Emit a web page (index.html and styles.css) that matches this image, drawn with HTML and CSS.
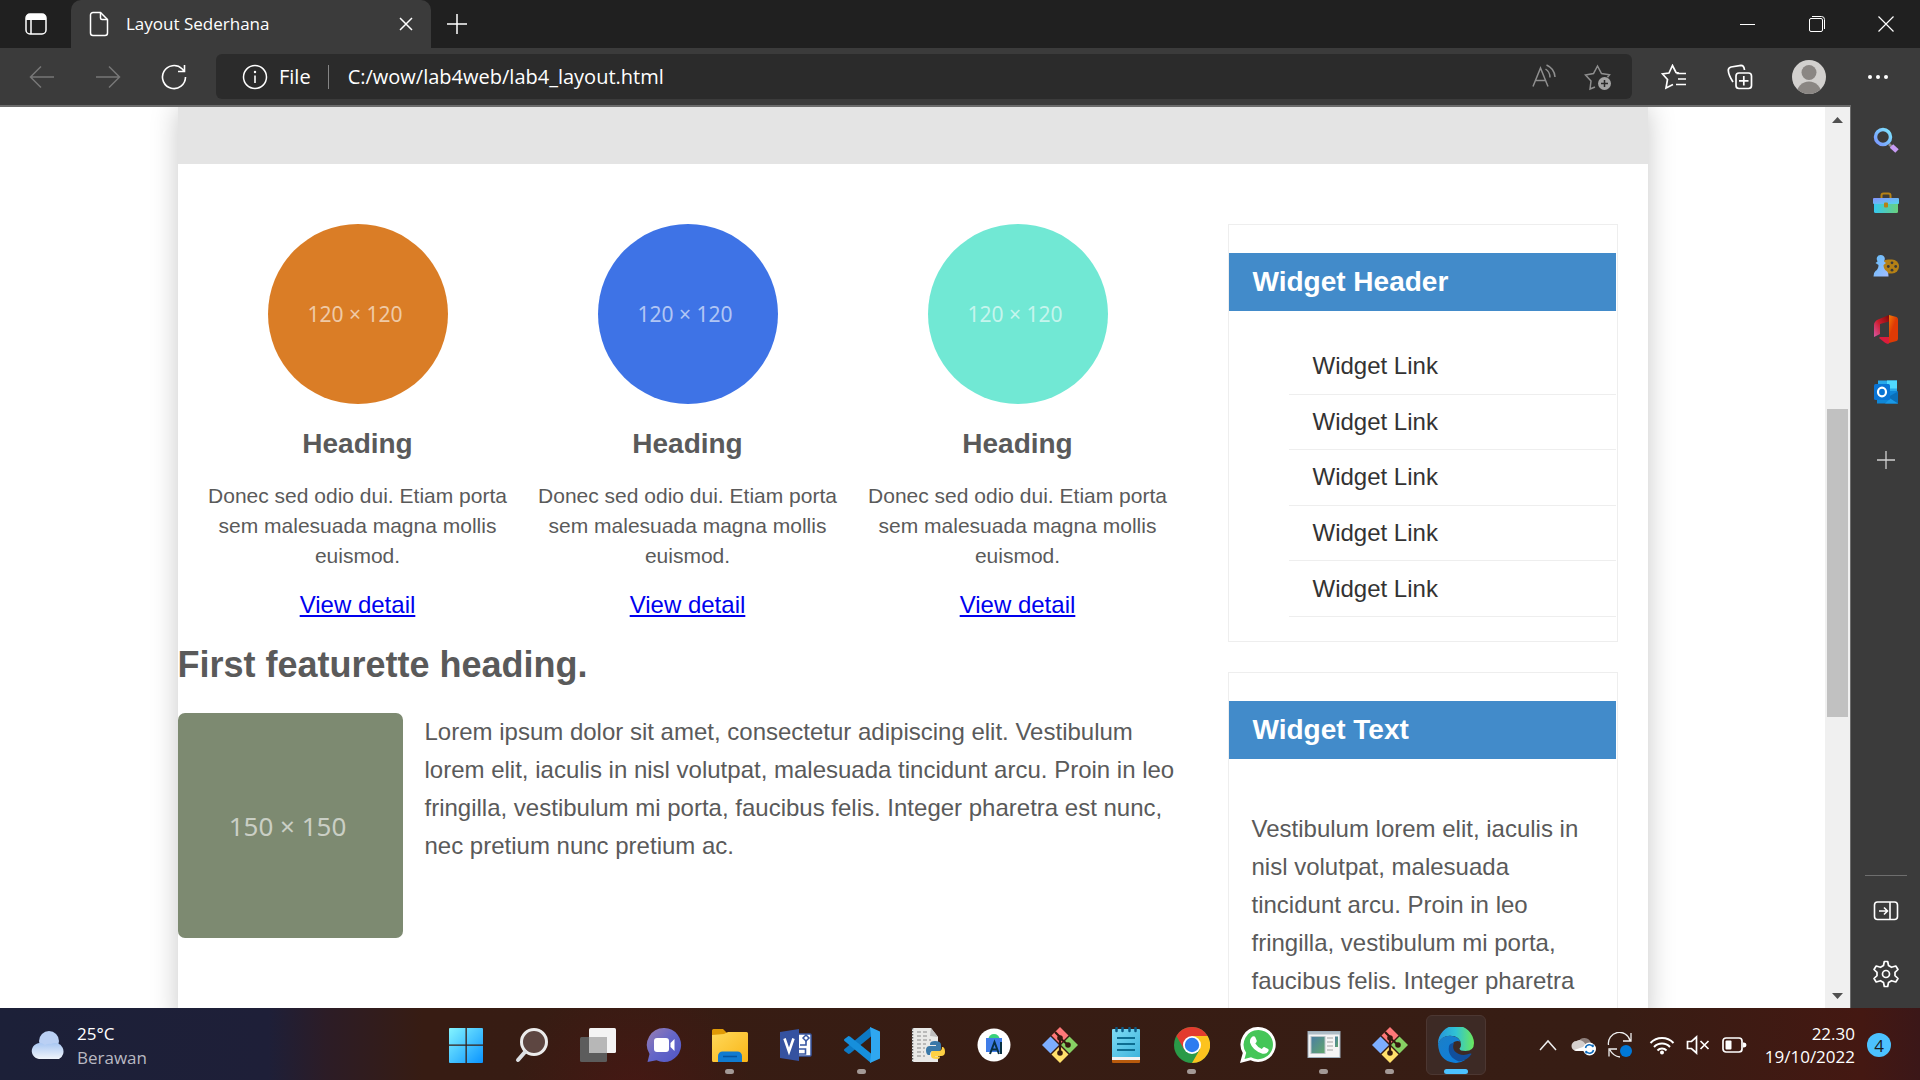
FILE: index.html
```html
<!DOCTYPE html>
<html lang="id">
<head>
<meta charset="utf-8">
<title>Layout Sederhana</title>
<link rel="stylesheet" href="styles.css">
</head>
<body>
<header class="titlebar">
  <button class="tab-actions" aria-label="Tab actions"><svg width="24" height="24" viewBox="0 0 24 24"><rect x="2" y="2" width="20" height="20" rx="4" fill="none" stroke="#fff" stroke-width="1.5"/><path d="M2 8V6a4 4 0 0 1 4-4h12a4 4 0 0 1 4 4v2z" fill="#fff"/><path d="M7 8v14" stroke="#fff" stroke-width="1.5"/></svg></button>
  <div class="tab">
    <svg width="20" height="26" viewBox="0 0 20 26" fill="none" stroke="#fff" stroke-width="1.5"><path d="M4 1.500h7.500l7 7V22a2.500 2.500 0 0 1-2.500 2.500H4A2.500 2.500 0 0 1 1.500 22V4A2.500 2.500 0 0 1 4 1.500z"/><path d="M11.500 1.500V7A1.500 1.500 0 0 0 13 8.500h5.500"/></svg>
    <span class="tab-title">Layout Sederhana</span>
    <button class="tab-close" aria-label="Close tab"><svg width="14" height="14" viewBox="0 0 14 14"><path d="M1 1l12 12M13 1L1 13" stroke="#fff" stroke-width="1.500"/></svg></button>
  </div>
  <button class="new-tab" aria-label="New tab"><svg width="22" height="22" viewBox="0 0 22 22"><path d="M11 1v20M1 11h20" stroke="#fff" stroke-width="1.500"/></svg></button>
  <div class="window-buttons">
    <button aria-label="Minimize"><svg width="16" height="16" viewBox="0 0 16 16"><path d="M0 8.500h15" stroke="#fff"/></svg></button>
    <button aria-label="Restore"><svg width="16" height="16" viewBox="0 0 16 16" fill="none" stroke="#fff"><rect x=".5" y="2.500" width="13" height="13" rx="1.500"/><path d="M3 .5h9.500a3 3 0 0 1 3 3V13"/></svg></button>
    <button aria-label="Close"><svg width="16" height="16" viewBox="0 0 16 16"><path d="M.5.500l15 15M15.500.500l-15 15" stroke="#fff" stroke-width="1.200"/></svg></button>
  </div>
</header>

<nav class="toolbar">
  <button class="nav-button" aria-label="Back"><svg width="26" height="24" viewBox="0 0 26 24" fill="none" stroke="#777" stroke-width="1.500"><path d="M25 12H1.500M12 1.500L1.500 12 12 22.500"/></svg></button>
  <button class="nav-button" aria-label="Forward"><svg width="26" height="24" viewBox="0 0 26 24" fill="none" stroke="#777" stroke-width="1.500"><path d="M1 12h23.500M14 1.500L24.500 12 14 22.500"/></svg></button>
  <button class="nav-button" aria-label="Refresh"><svg width="26" height="26" viewBox="0 0 26 26" fill="none" stroke="#fff" stroke-width="1.600"><path d="M24.500 13A11.500 11.500 0 1 1 21 4.800l1.800 2M23.500 1v6.500H17"/></svg></button>
  <div class="address">
    <svg width="26" height="26" viewBox="0 0 26 26"><circle cx="13" cy="13" r="11.500" fill="none" stroke="#fff" stroke-width="1.500"/><path d="M13 11.500V19" stroke="#fff" stroke-width="1.600"/><circle cx="13" cy="8" r="1.200" fill="#fff"/></svg>
    <span class="scheme">File</span>
    <input class="url" type="text" aria-label="Address" value="C:/wow/lab4web/lab4_layout.html">
    <button aria-label="Read aloud"><svg width="26" height="26" viewBox="0 0 26 26" fill="none" stroke="#8f8f8f" stroke-width="1.500"><path d="M2 22.500L9.500 4 17 22.500M4.500 16.500h10M14.500 5q4.500 3 4.500 8.500M15.500 1q8 3.500 8.500 12"/></svg></button>
    <button aria-label="Add to favorites"><svg width="28" height="28" viewBox="0 0 28 28"><path d="M11 24l-5 2 1-8-5.500-6 8-1.500L13.500 3l4 7.500 8 1.300-2 2.500" fill="none" stroke="#8f8f8f" stroke-width="1.500"/><circle cx="20.500" cy="20.500" r="6.500" fill="#a3a3a3"/><path d="M20.500 17v7M17 20.500h7" stroke="#2b2b2b" stroke-width="1.500"/></svg></button>
  </div>
  <div class="tools">
    <button aria-label="Favorites"><svg width="26" height="26" viewBox="0 0 26 26" fill="none" stroke="#fff" stroke-width="1.700"><path d="M18 9l-3-.5-3.500-7L8 9 1.500 10l5 5.500-1.500 8.500 7-3.500M15.500 9.500H25M17 15h8M15 20.500h10"/></svg></button>
    <button aria-label="Collections"><svg width="26" height="26" viewBox="0 0 26 26" fill="none" stroke="#fff" stroke-width="1.700"><rect x="9" y="9" width="15.500" height="15.500" rx="3"/><path d="M16.800 12v9.500M12 16.800h9.500M6 18Q1.500 11 1.300 6.500 1 4 4 3l10-1.700q3 0 3.500 4.700"/></svg></button>
    <button class="profile" aria-label="Profile"><svg width="34" height="34" viewBox="0 0 34 34"><clipPath id="round"><circle cx="17" cy="17" r="17"/></clipPath><g clip-path="url(#round)"><path d="M0 0h34v34H0z" fill="#d2d0ce"/><circle cx="17" cy="12.500" r="7.500" fill="#8a8683"/><circle cx="17" cy="34" r="12.500" fill="#8a8683"/></g></svg></button>
    <button aria-label="Settings and more"><svg width="22" height="6" viewBox="0 0 22 6" fill="#fff"><circle cx="3" cy="3" r="2"/><circle cx="11" cy="3" r="2"/><circle cx="19" cy="3" r="2"/></svg></button>
  </div>
</nav>

<div class="workspace">
  <div class="viewport">
    <div class="page">
      <div class="container">
        <div class="hero"></div>
        <div class="columns">
          <main class="main">
            <div class="features">
              <section class="feature">
                <div class="thumb thumb-orange">120 × 120</div>
                <h3>Heading</h3>
                <p>Donec sed odio dui. Etiam porta sem malesuada magna mollis euismod.</p>
                <a href="#">View detail</a>
              </section>
              <section class="feature">
                <div class="thumb thumb-blue">120 × 120</div>
                <h3>Heading</h3>
                <p>Donec sed odio dui. Etiam porta sem malesuada magna mollis euismod.</p>
                <a href="#">View detail</a>
              </section>
              <section class="feature">
                <div class="thumb thumb-mint">120 × 120</div>
                <h3>Heading</h3>
                <p>Donec sed odio dui. Etiam porta sem malesuada magna mollis euismod.</p>
                <a href="#">View detail</a>
              </section>
            </div>
            <article class="featurette">
              <h2>First featurette heading.</h2>
              <div class="media">
                <div class="picture">150 × 150</div>
                <p>Lorem ipsum dolor sit amet, consectetur adipiscing elit. Vestibulum lorem elit, iaculis in nisl volutpat, malesuada tincidunt arcu. Proin in leo fringilla, vestibulum mi porta, faucibus felis. Integer pharetra est nunc, nec pretium nunc pretium ac.</p>
              </div>
            </article>
          </main>
          <aside class="widgets">
            <section class="widget">
              <h3>Widget Header</h3>
              <ul>
                <li><a href="#">Widget Link</a></li>
                <li><a href="#">Widget Link</a></li>
                <li><a href="#">Widget Link</a></li>
                <li><a href="#">Widget Link</a></li>
                <li><a href="#">Widget Link</a></li>
              </ul>
            </section>
            <section class="widget">
              <h3>Widget Text</h3>
              <p>Vestibulum lorem elit, iaculis in nisl volutpat, malesuada tincidunt arcu. Proin in leo fringilla, vestibulum mi porta, faucibus felis. Integer pharetra</p>
            </section>
          </aside>
        </div>
      </div>
    </div>
    <div class="scrollbar">
      <svg width="11" height="6" viewBox="0 0 11 6"><path d="M0 6l5.500-6L11 6z" fill="#505050"/></svg>
      <div class="track"><div class="thumb-bar"></div></div>
      <svg width="11" height="6" viewBox="0 0 11 6"><path d="M0 0l5.500 6L11 0z" fill="#505050"/></svg>
    </div>
  </div>
  <aside class="sidebar">
    <button aria-label="Search"><svg width="28" height="28" viewBox="0 0 28 28"><defs><linearGradient id="lens" x1="0" y1="1" x2="1" y2="0"><stop offset="0" stop-color="#7a95ff"/><stop offset="1" stop-color="#7de6ff"/></linearGradient></defs><path d="M17 18l3 3" stroke="#8a8886" stroke-width="2.500"/><path d="M19.500 20l5.500 5" stroke="#c79bf5" stroke-width="5"/><circle cx="11" cy="11" r="7.500" fill="none" stroke="url(#lens)" stroke-width="3.500"/></svg></button>
    <button aria-label="Shopping"><svg width="28" height="24" viewBox="0 0 28 24"><defs><linearGradient id="box" x2="1"><stop offset="0" stop-color="#35c8f0"/><stop offset="1" stop-color="#6ad07c"/></linearGradient><linearGradient id="lid" x2="1" y2="1"><stop offset="0" stop-color="#8593ff"/><stop offset="1" stop-color="#55d5ee"/></linearGradient></defs><path d="M9.500 8V4.500A2 2 0 0 1 11.500 2.500h5a2 2 0 0 1 2 2V8" fill="none" stroke="#b58115" stroke-width="2"/><path d="M2 10h24v10.500a1.500 1.500 0 0 1-1.500 1.500h-21A1.500 1.500 0 0 1 2 20.500z" fill="url(#box)"/><rect x="1" y="7" width="26" height="6" rx="1" fill="url(#lid)"/><rect x="12" y="11.500" width="4" height="5" rx="1" fill="#b58115"/></svg></button>
    <button aria-label="Games"><svg width="28" height="24" viewBox="0 0 28 24"><rect x="9" y="5.500" width="18" height="14" rx="7" fill="#b58115"/><g fill="#3b3b3b"><circle cx="20" cy="8.800" r="1.400"/><circle cx="20" cy="16.200" r="1.400"/><circle cx="16.300" cy="12.500" r="1.400"/><circle cx="23.700" cy="12.500" r="1.400"/></g><defs><linearGradient id="pawn" y2="1"><stop offset="0" stop-color="#62bdf8"/><stop offset="1" stop-color="#a2bcff"/></linearGradient></defs><path d="M8.500 1a4 4 0 0 1 3.500 6.500l2 1.500-2.500 2q0 4 3 6 2 1 2 5.500h-15q0-4 2-5.500 3-2 3-6L3.500 9l2-1.500A4 4 0 0 1 8.500 1z" fill="url(#pawn)"/></svg></button>
    <button aria-label="Office"><svg width="26" height="30" viewBox="0 0 26 30"><defs><linearGradient id="off" y2="1"><stop offset="0" stop-color="#f58a08"/><stop offset=".5" stop-color="#de3a05"/></linearGradient><linearGradient id="off2" x1="1" y1="0" x2="0" y2="1"><stop offset="0" stop-color="#7c0a08"/><stop offset=".5" stop-color="#cc1c2c"/><stop offset="1" stop-color="#d658a5"/></linearGradient></defs><path d="M16 1l-11 4.500Q1 7.500 1 11v12l6-3V10l9-2.500z" fill="url(#off2)"/><path d="M16 1l7.500 2Q25 3.500 25 5.500v19q0 2-1.500 2.500L14 29.500l2-6.500z" fill="url(#off)"/><path d="M6 24l1-1h9v6.500q-2 .5-4-.8z" fill="#dc1c3c"/></svg></button>
    <button aria-label="Outlook"><svg width="26" height="26" viewBox="0 0 26 26"><path d="M5 1.500h19v11H5z" fill="#28a8ea"/><path d="M14 1.500h10v8H14z" fill="#50d9ff"/><path d="M4 12h20.500v12.500H4z" fill="#0f87d8"/><path d="M25 12.500v12H12z" fill="#1a9ae8"/><path d="M25 12.500L15 18l10 6.500z" fill="#0a6fb8"/><rect x="1" y="5" width="16" height="16" rx="1.500" fill="#0a74d4"/><ellipse cx="9" cy="13" rx="4" ry="4.300" fill="none" stroke="#fff" stroke-width="2.200"/></svg></button>
    <button class="side-add" aria-label="Customize"><svg width="20" height="20" viewBox="0 0 20 20"><path d="M10 1v18M1 10h18" stroke="#d0d0d0" stroke-width="1.300"/></svg></button>
    <hr>
    <button aria-label="Hide sidebar"><svg width="26" height="22" viewBox="0 0 26 22" fill="none" stroke="#fff" stroke-width="1.600"><rect x="1.500" y="2" width="23" height="17.500" rx="3"/><path d="M17 2v17.500M6 11h8M11 7.500l3.500 3.500-3.500 3.500"/></svg></button>
    <button aria-label="Settings"><svg width="28" height="28" viewBox="0 0 28 28" fill="none" stroke="#fff" stroke-width="1.700" stroke-linejoin="round"><path d="M11.500 5.500l.8-4h3.400l.8 4 3 1.800L23.800 6l2.200 3.500-3 2.800v3.400l3 2.800-2.200 3.500-4.300-1.300-3 1.800-.8 4h-3.400l-.8-4-3-1.800L4.200 22 2 18.500l3-2.800v-3.400L2 9.500 4.200 6l4.300 1.300z"/><circle cx="14" cy="14" r="3.500"/></svg></button>
  </aside>
</div>

<footer class="taskbar">
  <button class="weather">
    <svg width="38" height="30" viewBox="0 0 38 30"><defs><linearGradient id="cloud" x2="0" y2="1"><stop offset="0" stop-color="#a9c7f2"/><stop offset="1" stop-color="#f0f4fb"/></linearGradient></defs><circle cx="19" cy="11" r="10" fill="#bad0f4"/><path d="M9 29a8 8 0 1 1 6-14 9 9 0 0 1 6-1 8.500 8.500 0 1 1 8 15z" fill="url(#cloud)"/></svg>
    <span class="weather-text"><span>25°C</span><span class="muted">Berawan</span></span>
  </button>
  <div class="apps">
    <button class="app" aria-label="Start"><svg width="36" height="36" viewBox="0 0 36 36"><defs><linearGradient id="win" x2="1" y2="1"><stop offset="0" stop-color="#84f5ff"/><stop offset="1" stop-color="#0a94ff"/></linearGradient></defs><path d="M2 1h15.500v16.500H1V2a1 1 0 0 1 1-1zM18.800 1H34a1 1 0 0 1 1 1v15.500H18.800zM1 18.800h16.500V36H2a1 1 0 0 1-1-1zM18.800 18.800H35V35a1 1 0 0 1-1 1H18.800z" fill="url(#win)"/></svg></button>
    <button class="app" aria-label="Search"><svg width="36" height="36" viewBox="0 0 36 36"><circle cx="20" cy="15" r="12.500" fill="#5d4641" stroke="#ececec" stroke-width="3"/><path d="M11 25l-7 8" stroke="#dde0e4" stroke-width="4" stroke-linecap="round"/></svg></button>
    <button class="app" aria-label="Task view"><svg width="36" height="36" viewBox="0 0 36 36"><rect x="9" y="1" width="27" height="25" rx="1.500" fill="#f4f4f4"/><rect x="0" y="10" width="27" height="25" rx="1.500" fill="#5c5c5c"/><path d="M9 10h18v16H9z" fill="#b7b7b7"/></svg></button>
    <button class="app" aria-label="Chat"><svg width="36" height="36" viewBox="0 0 36 36"><defs><linearGradient id="chat" x2="1" y2="1"><stop offset="0" stop-color="#9a7fb2"/><stop offset=".5" stop-color="#6466c8"/><stop offset="1" stop-color="#5055c5"/></linearGradient></defs><path d="M18.500 1a17 17 0 1 1-8 32.200L1.500 35l2-8A17 17 0 0 1 18.500 1z" fill="url(#chat)"/><rect x="8" y="11" width="15" height="14" rx="3" fill="#fff"/><path d="M24.500 16l4-4v12l-4-4z" fill="#fff"/></svg></button>
    <button class="app running" aria-label="File Explorer"><svg width="36" height="36" viewBox="0 0 36 36"><defs><linearGradient id="fold" x2="1" y2="1"><stop offset="0" stop-color="#ffd95a"/><stop offset="1" stop-color="#f9b517"/></linearGradient></defs><path d="M0 3.500A1.500 1.500 0 0 1 1.500 2H11l4 4v6H0z" fill="#e09a06"/><path d="M12 7l4-2h18.500A1.500 1.500 0 0 1 36 6.500v27a1.500 1.500 0 0 1-1.500 1.500h-33A1.500 1.500 0 0 1 0 33.500V8z" fill="url(#fold)"/><path d="M6 35v-6a4.500 4.500 0 0 1 4.500-4.500h15A4.500 4.500 0 0 1 30 29v6z" fill="#117bd0"/><path d="M11 29.500h14" stroke="#07539c" stroke-width="1.500"/></svg></button>
    <button class="app" aria-label="Visio"><svg width="36" height="36" viewBox="0 0 36 36"><rect x="15" y="7" width="18" height="22" rx="1" fill="#fff" stroke="#3857a3" stroke-width="1.500"/><path d="M28 13v5h-6M21 22h6.500v5H21" fill="none" stroke="#3857a3" stroke-width="1.600"/><path d="M28 8l3 3-3 3-3-3z" fill="#fff" stroke="#3857a3" stroke-width="1.500"/><path d="M2 5l19-3v32L2 31z" fill="#3552a0"/><path d="M6.500 11.500l4.500 13 4.500-13" fill="none" stroke="#fff" stroke-width="2.600"/></svg></button>
    <button class="app running" aria-label="Visual Studio Code"><svg width="36" height="36" viewBox="0 0 36 36"><path d="M27 9.500L6 26.500 4.500 27 .5 24q-1-1 0-2L27 0z" fill="#0d79c4"/><path d="M27 26.500L6 9.500 4.500 9 .5 12q-1 1 0 2L27 36z" fill="#168fdc"/><path d="M26 0l10 4.500v27L26 36l1-9.500v-17z" fill="#2fa7f0"/></svg></button>
    <button class="app" aria-label="Python"><svg width="36" height="36" viewBox="0 0 36 36"><path d="M2 1h19l7 9v25H2z" fill="#e9e9e7"/><path d="M21 1l-1 8 8 1z" fill="#bdbdbd"/><path d="M2.500 1v34" stroke="#555" stroke-width="1.500" stroke-dasharray="1.500 1.500"/><path d="M7 5h12M7 9h10M7 13h14M7 17h9M7 21h8M7 25h7M7 29h8" stroke="#a9a9a9" stroke-width="1.500" stroke-dasharray="4 2"/><path d="M25 14q6 0 6 4v4q0 2-2 2h-6q-3 0-3 4h-2q-2-1-2-5t4-4h6v-1h-6v-1q0-3 5-3z" fill="#3978a8"/><path d="M27 32q-6 0-6-3v-3q0-2 2-2h6q3 0 3-4h1q2 1 2 5t-4 4h-6v.5h5q0 2.500-3 2.500z" fill="#fdd043"/></svg></button>
    <button class="app" aria-label="Android Studio"><svg width="36" height="36" viewBox="0 0 36 36"><circle cx="18" cy="18" r="16.500" fill="#fff"/><path d="M12.500 12a5.500 5 0 0 1 11 0z" fill="#39d17c"/><rect x="10" y="11" width="16" height="14" fill="#3f7de8"/><path d="M14 27l4.500-12L23 27M16 22.500h5M25 15v12" fill="none" stroke="#073042" stroke-width="2"/></svg></button>
    <button class="app" aria-label="Git Bash"><svg width="36" height="36" viewBox="0 0 36 36"><path d="M18 0l8.500 8.500-8.500 8.500-8.500-8.500z" fill="#ff7878"/><path d="M8.500 9.500l8.500 8.500-8.500 8.500L0 18z" fill="#7daeff"/><path d="M27.500 9.500L36 18l-8.500 8.500L19 18z" fill="#86d163"/><path d="M18 19l8.500 8.500L18 36l-8.500-8.500z" fill="#ffe06b"/><path d="M13 5l5 5v16M18 11l8 7" fill="none" stroke="#35190f" stroke-width="2.200"/><circle cx="18" cy="11" r="2.800" fill="#35190f"/><circle cx="26" cy="18" r="2.800" fill="#35190f"/><circle cx="18" cy="26" r="2.800" fill="#35190f"/></svg></button>
    <button class="app" aria-label="Notepad"><svg width="36" height="36" viewBox="0 0 36 36"><defs><linearGradient id="note" y2="1"><stop offset="0" stop-color="#7fdcf5"/><stop offset="1" stop-color="#3eb4dc"/></linearGradient></defs><rect x="4" y="31" width="28" height="5" rx="1" fill="#b85a0c"/><path d="M4 29h28v4H4z" fill="#f2f2f2"/><path d="M5 2h26a1 1 0 0 1 1 1v27H4V3a1 1 0 0 1 1-1z" fill="url(#note)"/><path d="M9 11h18M9 17h18M9 23h18" stroke="#0d6d91" stroke-width="2"/><path d="M8.500 1v3M14.500 1v3M21.500 1v3M27.500 1v3" stroke="#0a5a85" stroke-width="2.500" stroke-linecap="round"/></svg></button>
    <button class="app running" aria-label="Chrome"><svg width="36" height="36" viewBox="0 0 36 36"><circle cx="18" cy="18" r="18" fill="#2a9a48"/><path d="M18 9h15.600A18 18 0 0 1 18 36l7.800-13.500z" fill="#fcc31e"/><path d="M10.200 22.500L2.400 9A18 18 0 0 1 33.600 9H18z" fill="#e33b2e"/><circle cx="18" cy="18" r="9" fill="#fff"/><circle cx="18" cy="18" r="7.200" fill="#2d7cf0"/></svg></button>
    <button class="app" aria-label="WhatsApp"><svg width="36" height="36" viewBox="0 0 36 36"><path d="M18.500 0a17.500 17.500 0 1 1-8 33.200L0 36l2.800-10A17.500 17.500 0 0 1 18.500 0z" fill="#fff"/><path d="M18.500 3a14.600 14.600 0 1 1-7.500 27.200L4.500 32l1.700-6.200A14.600 14.600 0 0 1 18.500 3z" fill="#45c658"/><path d="M12.500 9.500q2-1 2.800.8l1.500 3.500q.2 1-1.500 2.700 2.500 4 6.500 5.500 1.700-2.300 2.400-2l4 2q1 .8 0 2.500-1.800 3-5.700 2.200Q12.500 23.500 10 15.500q-.5-4 2.500-6z" fill="#fff"/></svg></button>
    <button class="app running" aria-label="Picture viewer"><svg width="36" height="36" viewBox="0 0 36 36"><defs><linearGradient id="pic" y2="1"><stop offset="0" stop-color="#4a7da4"/><stop offset="1" stop-color="#62a76b"/></linearGradient></defs><rect x="2" y="4.500" width="32" height="26" fill="#f5f5f5" stroke="#9fb0bd"/><path d="M2 5h32v2.500H2z" fill="#aebcc6"/><rect x="5" y="9.500" width="14" height="17" fill="url(#pic)" stroke="#b9c4c9"/><path d="M21 11h6M21 15h6M21 19h6M21 23h6" stroke="#ccc" stroke-width="2"/><path d="M29 9.500h3V20h-3z" fill="url(#pic)"/></svg></button>
    <button class="app running" aria-label="Git Bash"><svg width="36" height="36" viewBox="0 0 36 36"><path d="M18 0l8.500 8.500-8.500 8.500-8.500-8.500z" fill="#ff7878"/><path d="M8.500 9.500l8.500 8.500-8.500 8.500L0 18z" fill="#7daeff"/><path d="M27.500 9.500L36 18l-8.500 8.500L19 18z" fill="#86d163"/><path d="M18 19l8.500 8.500L18 36l-8.500-8.500z" fill="#ffe06b"/><path d="M13 5l5 5v16M18 11l8 7" fill="none" stroke="#35190f" stroke-width="2.200"/><circle cx="18" cy="11" r="2.800" fill="#35190f"/><circle cx="26" cy="18" r="2.800" fill="#35190f"/><circle cx="18" cy="26" r="2.800" fill="#35190f"/></svg></button>
    <button class="app running active" aria-label="Edge"><svg width="36" height="36" viewBox="0 0 36 36"><defs><linearGradient id="e1" x2="1"><stop offset="0" stop-color="#2594dc"/><stop offset=".5" stop-color="#30c3d4"/><stop offset="1" stop-color="#6be85c"/></linearGradient><linearGradient id="e2" y2="1"><stop offset="0" stop-color="#1c7fc6"/><stop offset="1" stop-color="#0a7ee0"/></linearGradient></defs><path d="M0 17A18 18 0 0 1 36 16q0 8-8.500 8-6 0-6-2.500 1.500-1.500 1.500-4Q22.500 9 12 8.800 3 9 0 17z" fill="url(#e1)"/><path d="M0 17Q3 8.800 12 8.800q8 .2 10.500 6-3-1.800-6 0-4 2.700-2.500 9Q17 33 27 33q-5 3.500-11 2.800Q1 34 0 17z" fill="url(#e2)"/><path d="M11 19q-2 11 10 15.500 8-.5 12.500-7.500 0-1-1.500-.4Q23 30.500 16.500 24q-2.500-4-.5-8-4 0-5 3z" fill="#114f9c"/></svg></button>
  </div>
  <div class="tray">
    <button class="chevron" aria-label="Show hidden icons"><svg width="18" height="12" viewBox="0 0 18 12"><path d="M1 11l8-9 8 9" fill="none" stroke="#eee" stroke-width="1.500"/></svg></button>
    <button aria-label="OneDrive"><svg width="26" height="22" viewBox="0 0 26 22"><path d="M7 8a7 7 0 0 1 13 1l-7 5z" fill="#8d7f7b"/><path d="M5.500 17a5 5 0 0 1 0-10 6 6 0 0 1 8.500 2.500L18 17z" fill="#d5cfcd"/><path d="M3 16l12-4v5H5z" fill="#fff"/><circle cx="18.500" cy="15" r="6.500" fill="#fff"/><path d="M14.500 14a4 4 0 0 1 7.500-1V10.500M22.500 16a4 4 0 0 1-7.500 1V19.500" fill="none" stroke="#0f6cbd" stroke-width="1.500"/></svg></button>
    <button class="update" aria-label="Windows Update"><svg width="26" height="26" viewBox="0 0 26 26" fill="none" stroke="#eee" stroke-width="1.300"><path d="M1.500 13A11 11 0 0 1 23 8.500M24 1v8h-8M2 24.500V17h8M3 18q3 6 10 7"/><circle cx="19" cy="19" r="6" fill="#0078d7" stroke="none"/></svg></button>
    <button class="wifi" aria-label="Wi-Fi"><svg width="26" height="20" viewBox="0 0 26 20" fill="none" stroke="#fff" stroke-width="2"><path d="M1.500 8a16 16 0 0 1 23 0M5 12a11 11 0 0 1 16 0M8.500 15.500a6 6 0 0 1 9 0" /><circle cx="13" cy="17.500" r="2" fill="#fff" stroke="none"/></svg></button>
    <button aria-label="Volume muted"><svg width="24" height="20" viewBox="0 0 24 20" fill="none" stroke="#fff" stroke-width="1.700"><path d="M1.500 6.500h4l5-4.500v16l-5-4.500h-4zM14.500 6l8 8M22.500 6l-8 8"/></svg></button>
    <button aria-label="Battery"><svg width="26" height="18" viewBox="0 0 26 18"><rect x="2" y="2" width="19" height="14" rx="3" fill="none" stroke="#fff" stroke-width="1.700"/><rect x="4.500" y="4.500" width="6" height="9" rx="1" fill="#fff"/><path d="M22 6.500h1a2 2 0 0 1 0 5h-1z" fill="#fff"/></svg></button>
    <button class="clock"><span>22.30</span><span>19/10/2022</span></button>
    <button class="badge" aria-label="Notifications">4</button>
  </div>
</footer>
</body>
</html>
```
FILE: styles.css
```css
* {
  box-sizing: border-box;
}

body {
  margin: 0;
  height: 100vh;
  display: flex;
  flex-direction: column;
  overflow: hidden;
  background: #fff;
  font-family: "Open Sans", "Noto Sans", sans-serif;
  color: #fff;
}

button {
  display: flex;
  align-items: center;
  justify-content: center;
  flex: none;
  margin: 0;
  padding: 0;
  border: 0;
  background: none;
  color: inherit;
  font: inherit;
}

svg {
  display: block;
  flex: none;
}

/* Browser title bar */
.titlebar {
  flex: none;
  display: flex;
  height: 48px;
  background: #202020;
}

.tab-actions {
  width: 71px;
}

.tab {
  display: flex;
  align-items: center;
  width: 360px;
  padding: 0 15px 0 18px;
  border-radius: 10px 10px 0 0;
  background: #3b3b3b;
}

.tab-title {
  flex: 1;
  margin-left: 17px;
  font-size: 17px;
  line-height: 24px;
}

.tab-close {
  width: 20px;
  height: 24px;
}

.new-tab {
  width: 52px;
}

.window-buttons {
  display: flex;
  margin-left: auto;
}

.window-buttons button {
  width: 69px;
}

/* Browser toolbar */
.toolbar {
  flex: none;
  display: flex;
  align-items: center;
  height: 57px;
  padding: 0 9px;
  background: #3b3b3b;
}

.nav-button {
  width: 66px;
}

.address {
  flex: 1;
  display: flex;
  align-items: center;
  height: 45px;
  margin-left: 9px;
  padding: 0 7px 0 26px;
  border-radius: 6px;
  background: #2b2b2b;
  font-size: 20px;
}

.address button {
  width: 54px;
}

.scheme {
  margin-left: 11px;
  padding-right: 17px;
  border-right: 1px solid #858585;
  line-height: 24px;
}

.url {
  flex: 1;
  min-width: 0;
  margin-left: 19px;
  padding: 0;
  border: 0;
  outline: 0;
  background: none;
  color: inherit;
  font: inherit;
}

.tools {
  display: flex;
  align-items: center;
  padding-left: 9px;
}

.tools button {
  width: 66px;
}

.tools .profile {
  width: 72px;
}

/* Area under the toolbar */
.workspace {
  flex: 1;
  display: flex;
  min-height: 0;
  background: #3b3b3b;
}

.viewport {
  flex: 1;
  display: flex;
  min-width: 0;
  border-top: 2px solid #6b6b6b;
  border-right: 1px solid #6b6b6b;
  background: #fff;
}

.page {
  flex: 1;
  min-width: 0;
  overflow: hidden;
  color: #5a5a5a;
  font-family: "Liberation Sans", Arial, sans-serif;
  font-size: 24px;
}

.page h2,
.page h3,
.page p,
.page ul {
  margin: 0;
  padding: 0;
}

.container {
  max-width: 1470px;
  min-height: 100%;
  margin: 0 auto;
  box-shadow: 0 0 26px rgba(0, 0, 0, 0.22);
  background: #fff;
}

.hero {
  height: 57px;
  background: #e4e4e4;
}

.columns {
  display: flex;
  padding-top: 60px;
}

.main {
  flex: 1;
  min-width: 0;
}

.features {
  display: grid;
  grid-template-columns: repeat(3, 1fr);
  padding: 0 15px;
}

.feature {
  display: flex;
  flex-direction: column;
  align-items: center;
  padding: 0 15px;
  text-align: center;
}

.thumb,
.picture {
  display: flex;
  align-items: center;
  justify-content: center;
  padding-right: 5px;
  color: rgba(255, 255, 255, 0.6);
  font-family: "Noto Sans", sans-serif;
}

.thumb {
  width: 180px;
  height: 180px;
  border-radius: 50%;
  font-size: 21px;
}

.thumb-orange {
  background: #da7d26;
}

.thumb-blue {
  background: #3e73e6;
}

.thumb-mint {
  background: #71e8d4;
}

.feature h3 {
  margin-top: 24px;
  font-size: 28px;
  line-height: 32px;
}

.feature p {
  margin-top: 21px;
  font-size: 21px;
  line-height: 30px;
}

.feature a {
  margin-top: 16px;
  color: #00e;
  line-height: 36px;
}

.featurette h2 {
  margin: 21px 0 27px;
  font-size: 36px;
  line-height: 42px;
}

.media {
  display: flex;
  gap: 22px;
  padding-right: 15px;
  line-height: 38px;
}

.picture {
  flex: none;
  width: 225px;
  height: 225px;
  border-radius: 7px;
  background: #7d8a71;
  font-size: 26px;
}

.widgets {
  flex: none;
  display: flex;
  flex-direction: column;
  gap: 30px;
  width: 450px;
  padding: 0 30px;
}

.widget {
  padding: 28px 1px 24px 0;
  border: 1px solid #eee;
}

.widget h3 {
  padding: 0 24px;
  background: #428bca;
  color: #fff;
  font-size: 28px;
  line-height: 58px;
}

.widget ul {
  display: grid;
  grid-auto-rows: 1fr;
  height: 278px;
  margin: 28px 0 0 60px;
  list-style: none;
}

.widget li {
  display: flex;
  align-items: center;
  padding: 0 24px;
  border-bottom: 1px solid #eee;
}

.widget a {
  color: #333;
  text-decoration: none;
}

.widget p {
  margin-top: 51px;
  padding: 0 24px 0 23px;
  line-height: 38px;
}

.scrollbar {
  flex: none;
  display: flex;
  flex-direction: column;
  align-items: center;
  width: 25px;
  padding: 10px 0 9px;
  background: #f0f0f0;
}

.track {
  flex: 1;
  width: 21px;
  margin: 9px 0;
  padding-top: 277px;
}

.thumb-bar {
  height: 308px;
  background: #c1c1c1;
}

.sidebar {
  flex: none;
  display: flex;
  flex-direction: column;
  width: 69px;
  padding: 3px 0;
}

.sidebar button {
  height: 63px;
}

.sidebar .side-add {
  margin-top: 5px;
}

.sidebar hr {
  width: 42px;
  margin: auto auto 3px;
  border: 0;
  border-top: 1px solid #6e6e6e;
}

/* Taskbar */
.taskbar {
  flex: none;
  display: grid;
  grid-template-columns: 1fr auto 1fr;
  height: 72px;
  background:
    radial-gradient(circle at 33% 120%, rgba(90, 18, 20, 0.4), transparent 120px),
    linear-gradient(90deg, #1c2038 0%, #1e1f38 14%, #2c1c26 17%, #371c13 22%, #371d14 84%, #441812 97%, #3b1718 100%);
}

.weather {
  justify-self: start;
  gap: 9px;
  padding-left: 30px;
  text-align: left;
}

.weather-text {
  display: flex;
  flex-direction: column;
  padding-top: 2px;
  font-size: 17px;
  line-height: 24px;
}

.muted {
  color: #b9b9c2;
}

.apps {
  display: flex;
  padding-left: 2px;
}

.app {
  position: relative;
  width: 60px;
  height: 60px;
  margin: 7px 3px;
  border-radius: 6px;
}

.app.active {
  border: 1px solid #4c3732;
  background: #3d2a25;
}

.app.running::after {
  content: "";
  position: absolute;
  bottom: 1px;
  left: 50%;
  width: 9px;
  height: 5px;
  margin-left: -5px;
  border-radius: 3px;
  background: #a39996;
}

.app.active::after {
  bottom: 0;
  width: 24px;
  margin-left: -12px;
  background: #4cc2ff;
}

.tray {
  display: flex;
  align-items: center;
  justify-content: flex-end;
  padding-right: 29px;
}

.tray button {
  width: 36px;
}

.tray .update {
  margin-right: 6px;
}

.tray .clock {
  flex-direction: column;
  align-items: flex-end;
  width: 103px;
  font-size: 17px;
  line-height: 23px;
}

.tray .badge {
  width: 24px;
  height: 24px;
  margin-left: 12px;
  border-radius: 50%;
  background: #4cc2ff;
  color: #1b1b1b;
  font-size: 17px;
}
```
